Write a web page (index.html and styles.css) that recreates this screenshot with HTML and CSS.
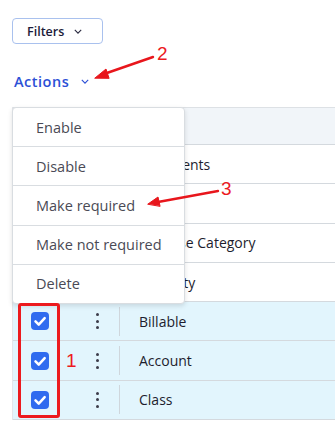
FILE: index.html
```html
<!DOCTYPE html>
<html lang="en">
<head>
  <meta charset="UTF-8" />
  <title>Fields</title>
  <link rel="stylesheet" href="styles.css">
</head>
<body>
  <div class="page">
    <button class="filters">Filters
      <svg class="chev" viewBox="0 0 10 6"><path d="M1 1 L5 5 L9 1" /></svg>
    </button>

    <div class="actions">Actions
      <svg class="chev blue" viewBox="0 0 10 6"><path d="M1 1 L5 5 L9 1" /></svg>
    </div>

    <div class="table-wrap">
      <div class="table">
        <div class="row head"></div>
        <div class="row"><span class="cb-cell"></span><span class="kebab-cell"></span><span class="name">Comments</span></div>
        <div class="row"><span class="cb-cell"></span><span class="kebab-cell"></span><span class="name">Memo</span></div>
        <div class="row"><span class="cb-cell"></span><span class="kebab-cell"></span><span class="name">Expense Category</span></div>
        <div class="row"><span class="cb-cell"></span><span class="kebab-cell"></span><span class="name">Quantity</span></div>
        <div class="row sel">
          <span class="cb-cell"><span class="cb"><svg viewBox="0 0 10 10"><path d="M2.5 5.2 L4.3 7 L7.6 3.4" /></svg></span></span>
          <span class="kebab-cell"><span class="kebab"><i></i><i></i><i></i></span></span>
          <span class="name">Billable</span>
        </div>
        <div class="row sel">
          <span class="cb-cell"><span class="cb"><svg viewBox="0 0 10 10"><path d="M2.5 5.2 L4.3 7 L7.6 3.4" /></svg></span></span>
          <span class="kebab-cell"><span class="kebab"><i></i><i></i><i></i></span></span>
          <span class="name">Account</span>
        </div>
        <div class="row sel">
          <span class="cb-cell"><span class="cb"><svg viewBox="0 0 10 10"><path d="M2.5 5.2 L4.3 7 L7.6 3.4" /></svg></span></span>
          <span class="kebab-cell"><span class="kebab"><i></i><i></i><i></i></span></span>
          <span class="name">Class</span>
        </div>
      </div>

      <ul class="menu">
        <li>Enable</li>
        <li>Disable</li>
        <li>Make required</li>
        <li>Make not required</li>
        <li>Delete</li>
      </ul>

      <div class="redbox"></div>
    </div>
  </div>

  <!-- annotations -->
  <svg class="notes" viewBox="0 0 335 423">
    <g stroke="#e8161c" stroke-width="2.4" stroke-linecap="round" fill="#e8161c">
      <line x1="153" y1="57" x2="104" y2="74" />
      <polygon points="95,78 106,69 109,78" stroke-width="1" />
      <line x1="218" y1="191" x2="158" y2="202" />
      <polygon points="148,204 158,197 160,206" stroke-width="1" />
    </g>
  </svg>
  <span class="num n1">1</span>
  <span class="num n2">2</span>
  <span class="num n3">3</span>
</body>
</html>
```

FILE: styles.css
```css
html, body {
  margin: 0;
  padding: 0;
  background: #fff;
  font-family: 'Open Sans', sans-serif;
  overflow: hidden;
}

.page {
  padding-top: 18px;
}

.filters {
  display: flex;
  align-items: center;
  gap: 10px;
  margin-left: 12px;
  width: 91px;
  height: 26px;
  padding: 0 0 0 14px;
  background: #fff;
  border: 1px solid #a9c1ee;
  border-radius: 4px;
  font-family: 'Open Sans', sans-serif;
  font-size: 12.5px;
  font-weight: 600;
  color: #1c1b3a;
}

.chev {
  width: 8px;
  height: 5px;
  fill: none;
  stroke: #2a2a40;
  stroke-width: 1.4;
}

.chev.blue {
  stroke: #2c50d6;
}

.actions {
  display: flex;
  align-items: center;
  gap: 12px;
  margin: 27px 0 0 14px;
  height: 20px;
  font-size: 14.5px;
  font-weight: 600;
  color: #2c50d6;
  letter-spacing: 0.5px;
}

.table-wrap {
  position: relative;
  margin-top: 16px;
  margin-left: 12px;
}

.table {
  border-left: 1px solid #e3e6ea;
}

.row {
  display: flex;
  align-items: center;
  height: 38.3px;
  border-bottom: 1px solid #d4d9de;
  font-size: 14px;
  color: #1d1d2e;
}

.row.head {
  height: 36px;
  background: #f1f5f9;
  border-top: 1px solid #dde1e5;
}

.row.sel {
  background: #e2f5fd;
}

.cb-cell {
  width: 60px;
  display: flex;
  padding-left: 18px;
  box-sizing: border-box;
}

.cb {
  width: 18px;
  height: 18px;
  border-radius: 4px;
  background: #2f6bef;
  display: flex;
}

.cb svg {
  width: 18px;
  height: 18px;
  fill: none;
  stroke: #fff;
  stroke-width: 1.4;
  stroke-linecap: round;
  stroke-linejoin: round;
}

.kebab-cell {
  width: 47px;
  height: 29px;
  display: flex;
  align-items: center;
  justify-content: center;
  padding-left: 3px;
  box-sizing: border-box;
  border-right: 1px solid #cfd6dc;
}

.kebab {
  display: flex;
  flex-direction: column;
  gap: 3.5px;
}

.kebab i {
  width: 3px;
  height: 3px;
  border-radius: 50%;
  background: #3c3c4a;
}

.name {
  padding-left: 19px;
}

.menu {
  position: absolute;
  top: 0;
  left: 0;
  width: 173px;
  margin: 0;
  padding: 0;
  list-style: none;
  background: #fff;
  border: 1px solid #d9dde1;
  border-radius: 4px;
  box-shadow: 0 2px 5px rgba(0, 0, 0, 0.12);
  box-sizing: border-box;
}

.menu li {
  height: 38.2px;
  display: flex;
  align-items: center;
  padding-left: 23px;
  font-size: 14.5px;
  color: #4a4a55;
  border-bottom: 1px solid #d9dde1;
}

.menu li:last-child {
  border-bottom: none;
}

.redbox {
  position: absolute;
  left: 6px;
  top: 196px;
  width: 42px;
  height: 115px;
  border: 3px solid #ec1a1e;
  border-radius: 3px;
  box-sizing: border-box;
}

.notes {
  position: absolute;
  top: 0;
  left: 0;
  width: 335px;
  height: 423px;
  pointer-events: none;
}

.num {
  position: absolute;
  font-family: 'Liberation Sans', sans-serif;
  font-size: 19px;
  color: #ec1a1e;
  line-height: 1;
}

.n1 { left: 66px; top: 351px; }
.n2 { left: 157px; top: 44px; }
.n3 { left: 221px; top: 179px; }
```
